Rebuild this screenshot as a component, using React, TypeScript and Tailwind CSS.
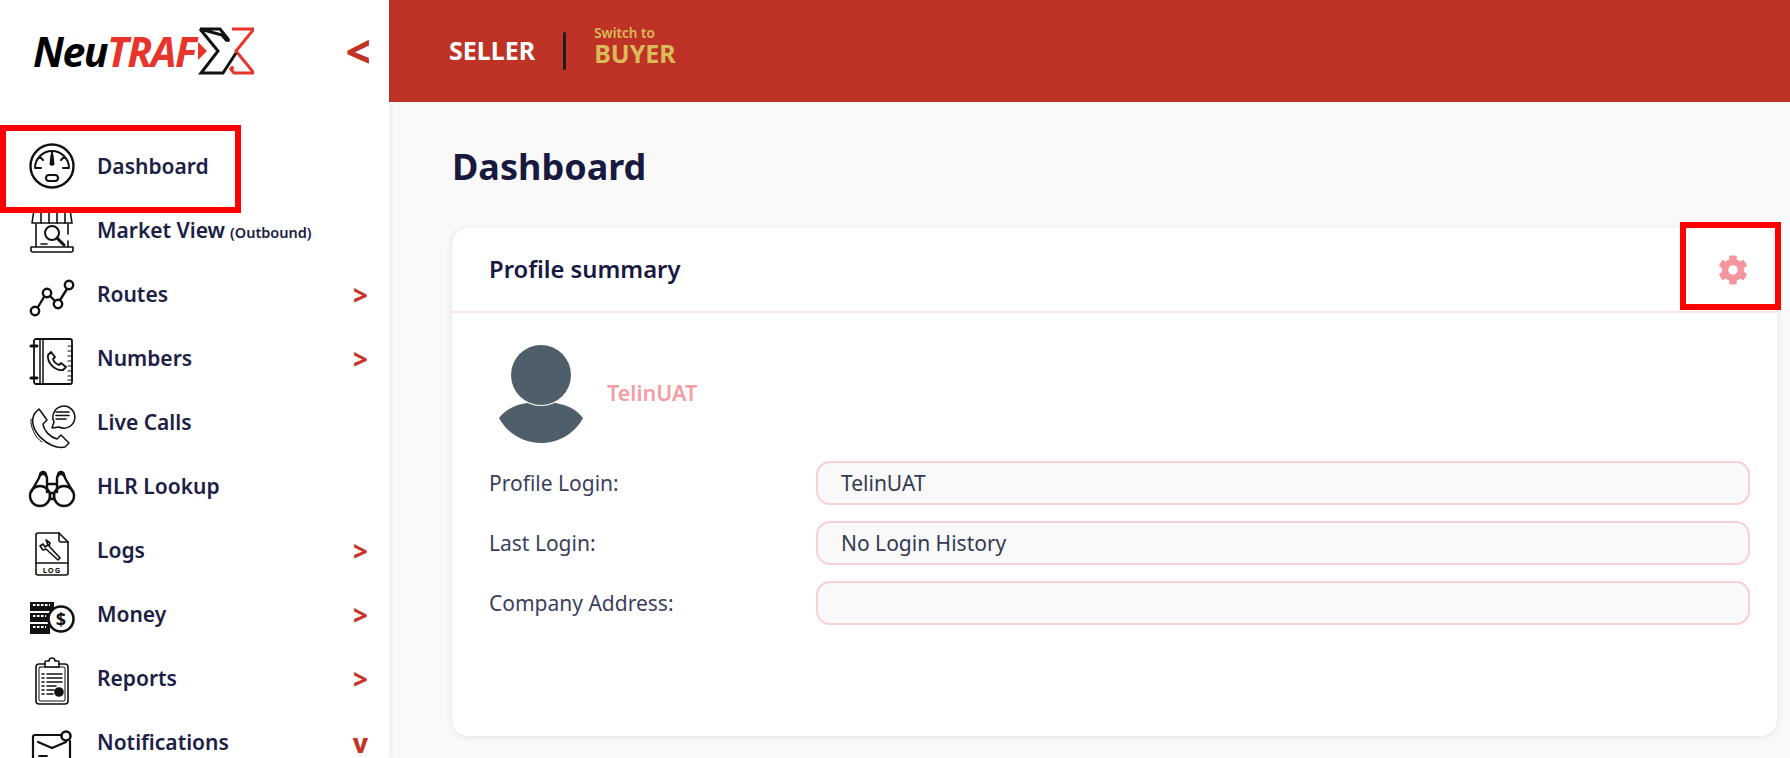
import type { ReactNode } from "react"
import { FaCog } from "react-icons/fa"

const font = { fontFamily: '"Noto Sans", "Open Sans", sans-serif' }

const Ico = ({ children, sw = 2 }: { children: ReactNode; sw?: number }) => (
  <svg viewBox="0 0 46 46" width={46} height={46} fill="none" stroke="#111" strokeWidth={sw} strokeLinecap="round" strokeLinejoin="round" className="shrink-0 overflow-visible">
    {children}
  </svg>
)

const GaugeIcon = () => (
  <Ico sw={2}>
    <circle cx="23" cy="22" r="21.500" strokeWidth="2.400" />
    <path d="M6 24a17 17 0 0 1 34 0M7 24h5M34 24h5M11 13l3 3M35 13l-3 3" />
    <path d="M23 8v2" />
    <path d="M21.500 20l1-9h1l1 9a2 2 0 0 1-3 0z" fill="#111" />
    <rect x="17" y="31" width="12" height="6" rx="3" />
  </Ico>
)

const MarketIcon = () => (
  <Ico sw={1.600}>
    <path d="M5 2h36l2 13H3z" />
    <path d="M12 2v13M20 2v13M28 2v13M36 2v13" />
    <path d="M7 16v23M39 16v10M39 33v6M2 39h42v3a2 2 0 0 1-2 2H4a2 2 0 0 1-2-2z" />
    <circle cx="23" cy="25" r="7" strokeWidth="2" />
    <path d="M28 30l7 7" strokeWidth="3" />
    <path d="M12 36h6" />
  </Ico>
)

const RoutesIcon = () => (
  <Ico sw={2.400}>
    <circle cx="6" cy="39" r="4.200" />
    <circle cx="18" cy="21" r="4.200" />
    <circle cx="29" cy="32" r="4.200" />
    <circle cx="40" cy="13" r="4.200" />
    <path d="M9 35l6-10M21 24l5 5M31 28l7-11" />
  </Ico>
)

const NumbersIcon = () => (
  <Ico sw={1.500}>
    <path d="M7 3h34a2 2 0 0 1 2 2v41a2 2 0 0 1-2 2H7a2 2 0 0 1-2-2V5a2 2 0 0 1 2-2z" strokeWidth="1.800" />
    <path d="M11 3v45M14 3v45" />
    <path d="M2 10h6M2 42h6" strokeWidth="3" />
    <path d="M39 10h4v34h-4M39 15h4M39 20h4M39 25h4M39 30h4M39 35h4M39 40h4" strokeWidth="1.200" />
    <path d="M19 19l3-3 4 5-2 2c1 3 3 5 6 6l2-2 5 4-3 3c-8 1-16-7-15-15z" strokeWidth="1.800" />
  </Ico>
)

const LiveIcon = () => (
  <Ico sw={1.500}>
    <path d="M6 13l4-4 8 11-4 4c1 7 7 13 14 15l4-4 8 8-4 4C20 51-4 28 6 13z" />
    <path d="M2 19C1 26 6 38 13 42" strokeWidth="1" />
    <path d="M23 28l2-6a11 11 0 1 1 5 5z" />
    <path d="M27 12h13M27 15.500h13M27 19h10" strokeWidth="1.600" />
  </Ico>
)

const BinocularsIcon = () => (
  <Ico sw={2.400}>
    <circle cx="11" cy="32" r="10" />
    <circle cx="35" cy="32" r="10" />
    <path d="M2 28L10 14a4 4 0 0 1 8 0v14M44 28L36 14a4 4 0 0 0-8 0v14M11 12V11a3 3 0 0 1 6 0v1M29 12v-1a3 3 0 0 1 6 0v1M18 20h10M21 29h4v6h-4z" />
  </Ico>
)

const LogsIcon = () => (
  <Ico sw={1.600}>
    <path d="M10 5h20l9 9v31a2 2 0 0 1-2 2H9a2 2 0 0 1-2-2V7a2 2 0 0 1 2-2z" />
    <path d="M30 5v7a2 2 0 0 0 2 2h7M7 35h32" />
    <path d="M16 11l4 3-1 3 11 12-2 2-12-11-3 1-3-4 3-2 2 3 3-2z" transform="translate(1 1)" />
    <text x="23" y="44.500" textAnchor="middle" fontSize="7.500" fontWeight="700" fill="#111" stroke="none" letterSpacing="1" style={font}>LOG</text>
  </Ico>
)

const MoneyIcon = () => (
  <Ico sw={2}>
    <path d="M1 10h24v9h-24zM1 21h20v9h-20zM1 32h20v10h-20z" fill="#111" stroke="none" />
    <path d="M4 13h17M4 24h13M4 35h13" stroke="#fff" strokeDasharray="2.500 1.500" strokeWidth="2" strokeLinecap="butt" />
    <circle cx="32" cy="27" r="12.500" fill="#fff" strokeWidth="2.600" />
    <text x="32" y="33.500" textAnchor="middle" fontSize="18" fontWeight="700" fill="#111" stroke="none" style={font}>$</text>
  </Ico>
)

const ReportsIcon = () => (
  <Ico sw={1.600}>
    <rect x="7" y="8" width="32" height="40" rx="3" />
    <rect x="10" y="11" width="26" height="34" rx="1" strokeWidth="1" />
    <path d="M16 8V6a1 1 0 0 1 1-1h3a3 3 0 0 1 6 0h3a1 1 0 0 1 1 1v5H16z" fill="#fff" />
    <path d="M13 18h2M18 18h15M13 22h2M18 22h15M13 26h2M18 26h15M13 30h2M18 30h9M13 34h2M18 34h7M13 38h2M18 38h6" strokeWidth="1.500" />
    <circle cx="30" cy="36" r="4" fill="#111" />
  </Ico>
)

const MailIcon = () => (
  <Ico sw={2.200}>
    <path d="M33 15H6a2 2 0 0 0-2 2v30M41 21v26" />
    <path d="M9 22l14 6 14-6" />
    <path d="M10 36h8M10 40h7" strokeWidth="1.800" />
    <circle cx="37" cy="16" r="4.500" fill="#fff" strokeWidth="2.600" />
  </Ico>
)

type NavItem = { label: string; sub?: string; icon: ReactNode; mark?: string }

const items: NavItem[] = [
  { label: "Dashboard", icon: <GaugeIcon /> },
  { label: "Market View", sub: "(Outbound)", icon: <MarketIcon /> },
  { label: "Routes", icon: <RoutesIcon />, mark: ">" },
  { label: "Numbers", icon: <NumbersIcon />, mark: ">" },
  { label: "Live Calls", icon: <LiveIcon /> },
  { label: "HLR Lookup", icon: <BinocularsIcon /> },
  { label: "Logs", icon: <LogsIcon />, mark: ">" },
  { label: "Money", icon: <MoneyIcon />, mark: ">" },
  { label: "Reports", icon: <ReportsIcon />, mark: ">" },
  { label: "Notifications", icon: <MailIcon />, mark: "v" },
]

const Logo = () => (
  <div className="flex items-center">
    <span className="text-[41px] leading-none font-bold italic tracking-[-1.500px] text-black" style={{ fontFamily: '"Open Sans", sans-serif' }}>
      Neu<span className="text-[#e8352c]">TRAF</span>
    </span>
    <svg viewBox="0 0 56 48" width={56} height={48} fill="none" strokeWidth={3} className="ml-[3px] shrink-0">
      <path d="M0 15l9 9-9 9z" fill="#e8352c" />
      <path d="M34 2H56L38 24 56 46H36L32 41" stroke="#e8352c" />
      <path d="M29 14L24 8 2 2h20l8 10M2 2l18 22L3 46h22l13-20" stroke="#111" />
      <circle cx="30" cy="13" r="2" fill="#111" />
      <circle cx="34" cy="41" r="2" fill="#e8352c" />
    </svg>
  </div>
)

const Field = ({ label, value }: { label: string; value?: string }) => (
  <div className="grid grid-cols-[327px_1fr] items-center">
    <span className="pt-[2px] text-[21px] text-[#3b3f5c]">{label}</span>
    <div className="flex h-11 items-center rounded-[14px] border-2 border-[#f9d0d3] bg-[#f9f9f9] pt-[2px] pl-[23px] text-[21px] text-[#343a52]">{value}</div>
  </div>
)

export default function App() {
  return (
    <div className="relative flex h-screen w-full overflow-hidden bg-[#f9f9f9]" style={font}>
      <aside className="z-10 flex w-[389px] shrink-0 flex-col bg-white shadow-[2px_0_4px_rgba(0,0,0,0.05)]">
        <div className="flex h-[102px] shrink-0 items-center justify-between pr-[18px] pl-[33px]">
          <Logo />
          <span className="text-[44px] leading-none font-extrabold text-[#c03327]">&lt;</span>
        </div>
        <nav className="flex flex-col pt-[33px]">
          {items.map((item) => (
            <div key={item.label} className="flex h-16 shrink-0 items-center pr-[21px] pl-[29px]">
              {item.icon}
              <span className="ml-[22px] flex-1 text-[21px] font-semibold whitespace-nowrap text-[#1b2044]">
                {item.label}
                {item.sub && <span className="ml-[5px] text-[14.500px]">{item.sub}</span>}
              </span>
              {item.mark && <span className="text-[26px] leading-none font-extrabold text-[#c93327]">{item.mark}</span>}
            </div>
          ))}
        </nav>
      </aside>

      <main className="flex min-w-0 flex-1 flex-col">
        <header className="flex h-[102px] shrink-0 items-center bg-[#bf3327] pl-[60px]">
          <span className="text-[25px] font-bold text-white">SELLER</span>
          <span className="mx-[28px] h-[38px] w-[3px] rounded-sm bg-[#1d1d1d]" />
          <div className="flex flex-col pb-[11px]">
            <span className="text-[13.500px] leading-[14px] font-semibold text-[#d9bc59]">Switch to</span>
            <span className="text-[25px] leading-[26px] font-bold text-[#d9bc59]">BUYER</span>
          </div>
        </header>
        <div className="flex h-[126px] shrink-0 items-center pt-[4px] pl-[63px]">
          <h1 className="text-[36px] font-bold text-[#17193f]">Dashboard</h1>
        </div>
        <section className="mr-[13px] ml-[63px] h-[508px] rounded-2xl bg-white shadow-[0_1px_6px_rgba(0,0,0,0.1)]">
          <div className="flex h-[85px] items-center justify-between border-b-2 border-[#fde3e4] pr-[29px] pl-[37px]">
            <h2 className="pt-[1px] text-[23.800px] font-semibold text-[#17193f]">Profile summary</h2>
            <FaCog className="h-[30px] w-[30px] text-[#f4969e]" />
          </div>
          <div className="pt-[32px] pr-[27px] pl-[37px]">
            <div className="flex items-center pl-[10px]">
              <svg viewBox="0 0 84 98" width={84} height={98} className="shrink-0">
                <path d="M0 73c8-10 20-16 42-16s34 6 42 16C76 88 60 98 42 98S8 88 0 73z" fill="#4f5f6a" />
                <circle cx="42" cy="30" r="31" fill="#fff" />
                <circle cx="42" cy="30" r="30" fill="#4f5f6a" />
              </svg>
              <span className="ml-6 -translate-y-px text-[21.500px] font-semibold text-[#f59ca4]">TelinUAT</span>
            </div>
            <div className="mt-[18px] flex flex-col gap-4">
              <Field label="Profile Login:" value="TelinUAT" />
              <Field label="Last Login:" value="No Login History" />
              <Field label="Company Address:" />
            </div>
          </div>
        </section>
      </main>

      <div className="absolute top-[125px] left-0 z-20 h-[88px] w-[241px] border-[6px] border-[#ff0000]" />
      <div className="absolute top-[222px] left-[1680px] z-20 h-[88px] w-[101px] border-[6px] border-[#ff0000]" />
    </div>
  )
}
